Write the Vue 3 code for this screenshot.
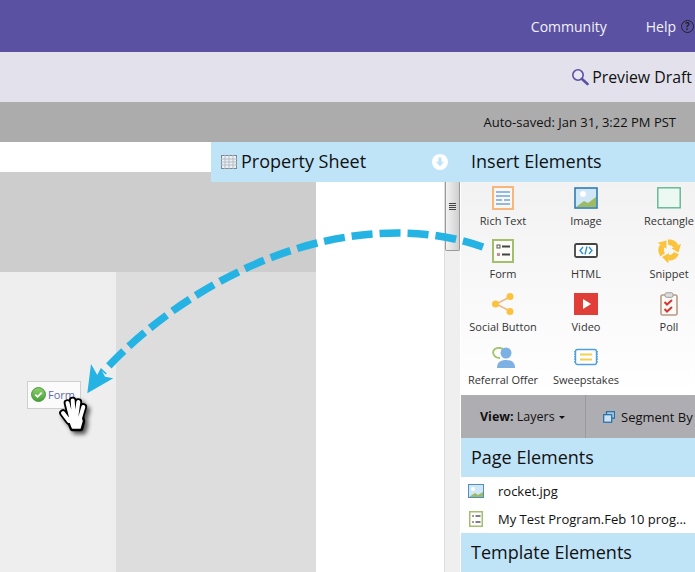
<template>
  <div class="page">
    <header class="topbar">
      <a class="nav-link">Community</a>
      <a class="nav-link help">Help <span class="help-q">?</span></a>
    </header>
    <div class="preview-bar">
      <svg class="mag" viewBox="0 0 18 18" width="18" height="18">
        <circle cx="7" cy="7" r="5.2" fill="#e8e6f4" stroke="#5a51a2" stroke-width="1.6" />
        <path d="M11 11l5.5 5" stroke="#5a51a2" stroke-width="2.6" stroke-linecap="round" />
      </svg>
      <span>Preview Draft</span>
    </div>
    <div class="save-bar">Auto-saved: Jan 31, 3:22 PM PST</div>

    <div class="workspace">
      <section class="canvas">
        <div class="strip"></div>
        <div class="band"></div>
        <div class="columns">
          <div class="col-a"></div>
          <div class="col-b"></div>
          <div class="col-c"></div>
        </div>

        <div class="sheet-head">
          <svg viewBox="0 0 16 14" width="16" height="14" class="grid-icon">
            <rect x="0.5" y="0.5" width="15" height="13" fill="#eef1f4" stroke="#7b8794" />
            <path d="M0 4h16M0 7h16M0 10h16M4 0v14M8 0v14M12 0v14" stroke="#b4bcc6" stroke-width="1" />
          </svg>
          <span class="sheet-title">Property Sheet</span>
          <svg viewBox="0 0 16 16" width="16" height="16" class="down-icon">
            <circle cx="8" cy="8" r="8" fill="#fff" />
            <path d="M6.4 3.5h3.2v4.3h2.4L8 12.4 4 7.8h2.4z" fill="#bfe4f8" />
          </svg>
        </div>

        <div class="scroll">
          <div class="thumb"><span class="grip"></span></div>
        </div>

        <div class="chip">
          <svg viewBox="0 0 16 16" width="15" height="15">
            <defs>
              <linearGradient id="chk" x1="0" y1="0" x2="0" y2="1">
                <stop offset="0" stop-color="#8fd06e" />
                <stop offset="1" stop-color="#4aa03a" />
              </linearGradient>
            </defs>
            <circle cx="8" cy="8" r="7.4" fill="url(#chk)" stroke="#3f9135" />
            <path d="M4.6 8.2l2.4 2.3 4.4-4.6" fill="none" stroke="#fff" stroke-width="1.9" />
          </svg>
          <span>Form</span>
        </div>
      </section>

      <aside class="panel">
        <h2 class="panel-head">Insert Elements</h2>
        <div class="elements">
          <div class="element" v-for="el in elements" :key="el.label">
            <svg class="el-icon" viewBox="0 0 24 24" width="24" height="24" v-html="el.icon"></svg>
            <span>{{ el.label }}</span>
          </div>
        </div>
        <div class="view-bar">
          <div class="view-select"><b>View:</b> Layers <i class="caret"></i></div>
          <div class="segment">
            <svg viewBox="0 0 12 12" width="12" height="12">
              <rect x="3.5" y="0.7" width="8" height="6.5" fill="#aac8e4" stroke="#1f6ea8" stroke-width="1.2" />
              <rect x="0.7" y="3.7" width="8" height="7.5" fill="#cfe0f0" stroke="#1f6ea8" stroke-width="1.2" />
            </svg>
            <span>Segment By</span>
          </div>
        </div>
        <h2 class="panel-head">Page Elements</h2>
        <ul class="rows">
          <li>
            <svg viewBox="0 0 16 14" width="16" height="14">
              <rect x="0.5" y="0.5" width="15" height="13" fill="#cfe7f7" stroke="#4d90c4" />
              <circle cx="5" cy="5" r="2" fill="#fff" />
              <path d="M1 13l6-4 3 2 5-3v5z" fill="#9dbb63" />
            </svg>
            <span>rocket.jpg</span>
          </li>
          <li>
            <svg viewBox="0 0 14 16" width="14" height="16">
              <rect x="0.75" y="0.75" width="12.5" height="14.5" fill="#fff" stroke="#a3bf6d" stroke-width="1.5" />
              <path d="M3 4h2v2H3zM3 10h2v2H3z" fill="#c98aa0" />
              <path d="M6.5 5h5M6.5 11h5" stroke="#555" stroke-width="1.4" />
            </svg>
            <span>My Test Program.Feb 10 prog...</span>
          </li>
        </ul>
        <h2 class="panel-head">Template Elements</h2>
      </aside>

      <!-- drag arrow over everything, coordinates are page coordinates -->
      <svg class="arrow" viewBox="0 142 695 430" width="695" height="430">
        <path
          d="M483 247C430 228 370 230 317 243C240 262 160 310 103 372"
          fill="none" stroke="#25b3e4" stroke-width="7.5" stroke-dasharray="21 7"
        />
        <path d="M87.3 393.3L91 364 97.3 375 100.7 368.3 105 376.7 113.3 378.3z" fill="#25b3e4" />
      </svg>

      <svg class="cursor" viewBox="0 0 40 42" width="40" height="42">
        <g stroke-linecap="round" fill="none">
          <g stroke="#000" stroke-width="7.6">
            <path d="M8 18l6 8M12.5 8l3.5 14M17.7 5.5l1 17M23.3 7l-2 15M28.3 12l-3.500 12" />
          </g>
          <path d="M12 22h15l1 4-2 8H17z" fill="#000" stroke="#000" stroke-width="4.500" stroke-linejoin="round" />
          <g stroke="#fff" stroke-width="4">
            <path d="M8 18l6 8M12.5 8l3.5 14M17.7 5.500l1 17M23.3 7l-2 15M28.3 12l-3.500 12" />
          </g>
          <path d="M13.500 23h12.500l1 3-2 7H17.500z" fill="#fff" stroke="#fff" stroke-width="1.500" stroke-linejoin="round" />
        </g>
      </svg>
    </div>
  </div>
</template>

<script setup>
const snippetArm = '<path d="M11 3.2A8 8 0 0 1 19 7.500" fill="none" stroke="#fbc33c" stroke-width="5.500"/><path d="M24 4.800L14.500 9.500 21.500 13.500z" fill="#fbc33c"/>'

const elements = [
  {
    label: 'Rich Text',
    icon: '<rect x="2" y="1" width="20" height="22" fill="#fdf6ee" stroke="#f5b67f" stroke-width="2"/><path d="M5 6h14M5 10h14M5 14h6M13 14h6M5 18h14" stroke="#8dbbe6" stroke-width="1.8"/>',
  },
  {
    label: 'Image',
    icon: '<rect x="1" y="2" width="22" height="20" fill="#cfe7f7" stroke="#2f7db5" stroke-width="1.6"/><circle cx="9" cy="8" r="3" fill="#fff"/><path d="M2 21l8-6 4 2 8-6v10z" fill="#9dbb63"/>',
  },
  {
    label: 'Rectangle',
    icon: '<rect x="0.8" y="1.8" width="22.4" height="20" fill="#ecf9f3" stroke="#5fb592" stroke-width="1.4"/>',
  },
  {
    label: 'Form',
    icon: '<rect x="2" y="1" width="20" height="22" fill="#fdfdf8" stroke="#a3bf6d" stroke-width="2"/><rect x="6" y="6" width="3" height="3" fill="none" stroke="#555"/><rect x="6" y="14" width="3" height="3" fill="#c98aa0"/><path d="M11 7.5h8M11 15.5h8" stroke="#444" stroke-width="2"/>',
  },
  {
    label: 'HTML',
    icon: '<rect x="1" y="5" width="22" height="13" rx="1.5" fill="#fff" stroke="#444" stroke-width="1.8"/><path d="M9 8l-3 3.5 3 3.5M15 8l3 3.5-3 3.5M13 7.5l-2 8" fill="none" stroke="#2f8fd0" stroke-width="1.4"/>',
  },
  {
    label: 'Snippet',
    icon: snippetArm + '<g transform="rotate(120 12 11)">' + snippetArm + '</g><g transform="rotate(240 12 11)">' + snippetArm + '</g>',
  },
  {
    label: 'Social Button',
    icon: '<path d="M19 5L5 12l14 7" fill="none" stroke="#f3b27a" stroke-width="1.4"/><circle cx="19" cy="4.5" r="3.5" fill="#fbc33c"/><circle cx="4.5" cy="12" r="3.5" fill="#fbc33c"/><circle cx="19" cy="19.5" r="3.5" fill="#fbc33c"/>',
  },
  {
    label: 'Video',
    icon: '<rect x="0" y="1" width="24" height="22" fill="#df3f38"/><path d="M9 7l8 5-8 5z" fill="#fff"/>',
  },
  {
    label: 'Poll',
    icon: '<rect x="4" y="3" width="16" height="20" rx="1.5" fill="#fbfaf7" stroke="#b99a85" stroke-width="1.6"/><rect x="8" y="0.8" width="8" height="4.5" rx="1.5" fill="#ddd" stroke="#999"/><path d="M7.5 10l2.5 2.5 5-4.5M7.5 17l2.5 2.5 5-4.5" fill="none" stroke="#d9352f" stroke-width="2"/>',
  },
  {
    label: 'Referral Offer',
    icon: '<path d="M9 13C3 13 0 7 4 4c3-2 7-1 9 1" fill="none" stroke="#a3c26c" stroke-width="1.8"/><circle cx="15" cy="8" r="5.5" fill="#7db1e3"/><path d="M6 23c0-6 4-8 9-8s9 2 9 8z" fill="#7db1e3"/>',
  },
  {
    label: 'Sweepstakes',
    icon: '<rect x="1.5" y="4.5" width="21" height="15" rx="2" fill="#fff" stroke="#4f9fdc" stroke-width="1.4"/><path d="M0.8 6v12M23.2 6v12" stroke="#4f9fdc" stroke-width="1.2" stroke-dasharray="1.5 1"/><path d="M6 9.5h12M6 14.5h12" stroke="#f4cf57" stroke-width="2"/>',
  },
]
</script>

<style scoped>
.page {
  width: 695px;
  height: 572px;
  overflow: hidden;
  font-family: "Open Sans", "Noto Sans", sans-serif;
  color: #111;
  display: flex;
  flex-direction: column;
}
.topbar {
  height: 52px;
  flex: none;
  background: #5a51a2;
  display: flex;
  justify-content: flex-end;
  align-items: center;
  gap: 39px;
  padding-right: 1px;
  color: #f2f1f8;
  font-size: 14px;
}
.help {
  display: flex;
  align-items: center;
  gap: 5px;
}
.help-q {
  width: 11px;
  height: 11px;
  border: 1.5px solid #222;
  border-radius: 50%;
  color: #222;
  font-size: 10px;
  font-weight: 700;
  line-height: 11px;
  text-align: center;
}
.preview-bar {
  height: 50px;
  flex: none;
  background: #e3e2ec;
  display: flex;
  justify-content: flex-end;
  align-items: center;
  gap: 3px;
  padding-right: 3px;
  font-size: 15.85px;
}
.save-bar {
  height: 40px;
  flex: none;
  background: #acacac;
  font-size: 13px;
  line-height: 40px;
  text-align: right;
  padding-right: 19px;
}
.workspace {
  position: relative;
  flex: 1;
  display: flex;
  min-height: 0;
}
.canvas {
  position: relative;
  width: 461px;
  flex: none;
  display: flex;
  flex-direction: column;
  background: #fff;
}
.strip {
  height: 30px;
  flex: none;
}
.band {
  height: 100px;
  width: 316px;
  flex: none;
  background: #cdcdcd;
}
.columns {
  flex: 1;
  display: flex;
}
.col-a {
  width: 116px;
  background: #eeeeee;
}
.col-b {
  width: 200px;
  background: #dddddd;
}
.col-c {
  flex: 1;
}
.sheet-head {
  position: absolute;
  top: 0;
  left: 211px;
  right: 0;
  height: 40px;
  background: #bfe4f8;
  display: flex;
  align-items: center;
  padding: 0 13px 0 10px;
  gap: 4px;
}
.sheet-title {
  flex: 1;
  font-size: 18px;
  padding-bottom: 2px;
}
.scroll {
  position: absolute;
  top: 40px;
  right: 0;
  bottom: 0;
  width: 15px;
  margin-right: 1px;
  background: #efefef;
  border-left: 1px solid #ddd;
}
.thumb {
  height: 69px;
  border: 1px solid #999;
  border-top: 0;
  border-radius: 0 0 2px 2px;
  background: linear-gradient(to right, #f2f2f2, #cfcfcf);
  display: flex;
  justify-content: center;
  padding-top: 21px;
  box-sizing: border-box;
}
.grip {
  width: 7px;
  height: 7px;
  background: repeating-linear-gradient(#444 0 1px, #ddd 1px 2px);
}
.chip {
  position: absolute;
  left: 27px;
  top: 239px;
  width: 54px;
  height: 28px;
  box-sizing: border-box;
  background: #fbfbfb;
  border: 1px solid #cfcfcf;
  display: flex;
  align-items: center;
  gap: 2px;
  padding: 0 0 1px 3px;
  font-size: 11px;
  color: #5b6ca8;
}
.cursor {
  position: absolute;
  left: 55px;
  top: 253px;
  filter: drop-shadow(3px 3px 2px rgba(0, 0, 0, 0.65));
}
.panel {
  width: 234px;
  flex: none;
  display: flex;
  flex-direction: column;
  overflow: hidden;
}
.panel-head {
  height: 39px;
  flex: none;
  margin: 0;
  background: #bfe4f8;
  font-size: 18px;
  font-weight: 400;
  line-height: 38px;
  padding-left: 10px;
  white-space: nowrap;
}
.panel-head:first-child {
  height: 40px;
  line-height: 39px;
}
.elements {
  height: 213px;
  flex: none;
  display: grid;
  grid-template-columns: repeat(3, 83px);
  grid-auto-rows: 53px;
  background: linear-gradient(#f2f2f2, #fff);
  font-size: 11px;
  color: #333;
}
.element {
  display: flex;
  flex-direction: column;
  align-items: center;
  white-space: nowrap;
}
.el-icon {
  margin-top: 4px;
  flex: none;
}
.element span {
  margin-top: 3px;
  padding-left: 1px;
}
.view-bar {
  height: 43px;
  flex: none;
  background: #aeadb1;
  display: flex;
  align-items: center;
  font-size: 13px;
  white-space: nowrap;
}
.view-select {
  width: 125px;
  height: 100%;
  line-height: 43px;
  padding-left: 19px;
  box-sizing: border-box;
  border-right: 1px solid #9a999d;
  font-size: 12.5px;
}
.caret {
  display: inline-block;
  margin-left: 1px;
  border: 3px solid transparent;
  border-top-color: #111;
  border-bottom: 0;
  vertical-align: 2px;
}
.segment {
  display: flex;
  align-items: center;
  gap: 6px;
  padding-left: 17px;
}
.rows {
  list-style: none;
  margin: 0;
  padding: 0;
  height: 56px;
  flex: none;
  font-size: 13px;
}
.rows li {
  height: 28px;
  display: flex;
  align-items: center;
  white-space: nowrap;
  padding-left: 7px;
}
.rows svg {
  width: 16px;
  margin-right: 14px;
  flex: none;
}
.arrow {
  position: absolute;
  left: 0;
  top: 0;
  pointer-events: none;
}
</style>
